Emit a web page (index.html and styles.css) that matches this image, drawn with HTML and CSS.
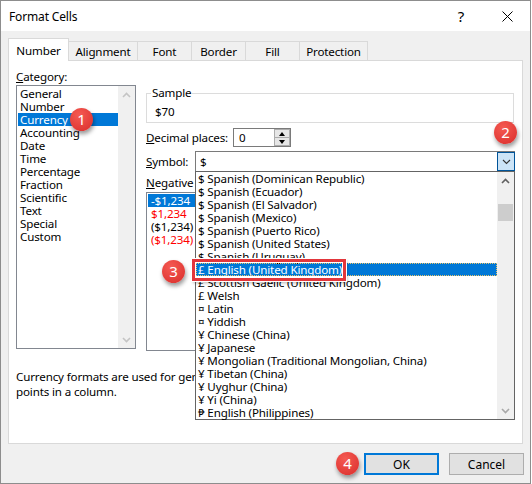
FILE: index.html
```html
<!DOCTYPE html>
<html>
  <head>
    <meta charset="UTF-8" />
    <title>Format Cells</title>
    <link rel="stylesheet" href="styles.css">
  </head>
  <body>
    <div class="window">

      <div class="titlebar">
        <span class="title">Format Cells</span>
        <span class="help">?</span>
        <span class="close">
          <svg width="11" height="11" viewBox="0 0 11 11"><path d="M0.5 0.5 L10.5 10.5 M10.5 0.5 L0.5 10.5" stroke="#000" stroke-width="1" fill="none"/></svg>
        </span>
      </div>

      <div class="client">

        <div class="tabs">
          <div class="tab active tab-number">Number</div>
          <div class="tab tab-wide">Alignment</div>
          <div class="tab">Font</div>
          <div class="tab">Border</div>
          <div class="tab">Fill</div>
          <div class="tab tab-last">Protection</div>
        </div>

        <div class="panel">
          <div class="main">

            <div class="category">
              <div class="label"><u>C</u>ategory:</div>
              <div class="listbox cat-list">
                <div class="items">
                  <div class="item">General</div>
                  <div class="item">Number</div>
                  <div class="item sel">Currency</div>
                  <div class="item">Accounting</div>
                  <div class="item">Date</div>
                  <div class="item">Time</div>
                  <div class="item">Percentage</div>
                  <div class="item">Fraction</div>
                  <div class="item">Scientific</div>
                  <div class="item">Text</div>
                  <div class="item">Special</div>
                  <div class="item">Custom</div>
                </div>
                <div class="vscroll">
                  <div class="arrow"><svg width="9" height="6" viewBox="0 0 9 6"><polyline points="1,5 4.5,1.5 8,5" fill="none" stroke="#c4c4c4" stroke-width="1.6"/></svg></div>
                  <div class="track"></div>
                  <div class="arrow"><svg width="9" height="6" viewBox="0 0 9 6"><polyline points="1,1 4.5,4.5 8,1" fill="none" stroke="#c4c4c4" stroke-width="1.6"/></svg></div>
                </div>
              </div>
            </div>

            <div class="details">
              <fieldset class="sample">
                <legend>Sample</legend>
                <div class="sample-value">$70</div>
              </fieldset>

              <div class="dec-row">
                <span class="row-label dec-label"><u>D</u>ecimal places:</span>
                <div class="spin-input">
                  <span class="spin-value">0</span>
                  <div class="spin">
                    <div class="spin-btn"><span class="tri-up"></span></div>
                    <div class="spin-btn"><span class="tri-down"></span></div>
                  </div>
                </div>
              </div>

              <div class="sym-row">
                <span class="row-label sym-label"><u>S</u>ymbol:</span>
                <div class="combo">
                  <span class="combo-value">$</span>
                  <div class="combo-btn">
                    <svg width="9" height="6" viewBox="0 0 9 6"><polyline points="1,1 4.5,4.5 8,1" fill="none" stroke="#333" stroke-width="1.1"/></svg>
                  </div>

                  <div class="dropdown">
                    <div class="items">
                      <div class="item">$ Spanish (Dominican Republic)</div>
                      <div class="item">$ Spanish (Ecuador)</div>
                      <div class="item">$ Spanish (El Salvador)</div>
                      <div class="item">$ Spanish (Mexico)</div>
                      <div class="item">$ Spanish (Puerto Rico)</div>
                      <div class="item">$ Spanish (United States)</div>
                      <div class="item">$ Spanish (Uruguay)</div>
                      <div class="item sel focus">£ English (United Kingdom)</div>
                      <div class="item">£ Scottish Gaelic (United Kingdom)</div>
                      <div class="item">£ Welsh</div>
                      <div class="item">¤ Latin</div>
                      <div class="item">¤ Yiddish</div>
                      <div class="item">¥ Chinese (China)</div>
                      <div class="item">¥ Japanese</div>
                      <div class="item">¥ Mongolian (Traditional Mongolian, China)</div>
                      <div class="item">¥ Tibetan (China)</div>
                      <div class="item">¥ Uyghur (China)</div>
                      <div class="item">¥ Yi (China)</div>
                      <div class="item">₱ English (Philippines)</div>
                    </div>
                    <div class="vscroll">
                      <div class="arrow"><svg width="9" height="6" viewBox="0 0 9 6"><polyline points="1,5 4.5,1.5 8,5" fill="none" stroke="#606060" stroke-width="1.6"/></svg></div>
                      <div class="track"><div class="thumb"></div></div>
                      <div class="arrow"><svg width="9" height="6" viewBox="0 0 9 6"><polyline points="1,1 4.5,4.5 8,1" fill="none" stroke="#a8a8a8" stroke-width="1.6"/></svg></div>
                    </div>
                  </div>
                </div>
              </div>

              <div class="label neg-label"><u>N</u>egative numbers:</div>
              <div class="listbox neg-list">
                <div class="item sel">-$1,234</div>
                <div class="item red">$1,234</div>
                <div class="item">($1,234)</div>
                <div class="item red">($1,234)</div>
              </div>
            </div>

          </div>

          <p class="desc">Currency formats are used for general monetary values. Use Accounting formats to align decimal<br>points in a column.</p>
        </div>

        <div class="buttons">
          <button class="btn ok">OK</button>
          <button class="btn">Cancel</button>
        </div>
      </div>

      <div class="callout"></div>
      <div class="badge b1">1</div>
      <div class="badge b2">2</div>
      <div class="badge b3">3</div>
      <div class="badge b4">4</div>
    </div>
  </body>
</html>
```

FILE: styles.css
```css
* {
  box-sizing: border-box;
}

body {
  margin: 0;
  font-family: "Noto Sans", "Open Sans", sans-serif;
  font-size: 11.6px;
  letter-spacing: -0.15px;
  color: #000;
  background: #fff;
}

.window {
  position: relative;
  width: 531px;
  height: 484px;
  border: 1px solid #8d8d8d;
  background: #f0f0f0;
  overflow: hidden;
}

/* title bar */

.titlebar {
  display: flex;
  align-items: center;
  height: 30px;
  padding-left: 8px;
  background: #fff;
  font-size: 12px;
}

.title {
  flex: 1;
}

.help {
  width: 46px;
  text-align: center;
  font-size: 15px;
}

.close {
  width: 46px;
  display: flex;
  justify-content: center;
}

/* dialog body */

.client {
  padding: 7px 6px 0 7px;
}

.tabs {
  display: flex;
  align-items: flex-end;
  height: 23px;
  margin-bottom: -1px;
  position: relative;
  z-index: 1;
}

.tab {
  width: 55px;
  height: 20px;
  margin-right: -1px;
  border: 1px solid #d9d9d9;
  background: #f0f0f0;
  display: flex;
  align-items: center;
  justify-content: center;
}

.tab-number {
  width: 61px;
}

.tab-wide {
  width: 70px;
}

.tab-last {
  width: 69px;
}

.tab.active {
  height: 23px;
  background: #fff;
  border-bottom: none;
  position: relative;
  z-index: 1;
}

.panel {
  height: 384px;
  margin-right: 1px;
  padding: 8px 7px 0 7px;
  background: #fff;
  border: 1px solid #d9d9d9;
}

.main {
  display: flex;
  gap: 10px;
}

.label {
  height: 16px;
  line-height: 16px;
  white-space: nowrap;
}

.row-label {
  white-space: nowrap;
}

/* list boxes */

.listbox {
  border: 1px solid #828790;
  background: #fff;
}

.item {
  height: 13px;
  line-height: 13px;
  padding-left: 2px;
  white-space: nowrap;
}

.item.sel {
  background: #0078d7;
  color: #fff;
}

.item.red {
  color: #ff0000;
}

.category {
  width: 121px;
}

.cat-list {
  display: flex;
  height: 264px;
}

.cat-list .items {
  flex: 1;
  padding: 1px 0 0 1px;
}

.vscroll {
  width: 17px;
  background: #f0f0f0;
  display: flex;
  flex-direction: column;
}

.vscroll .arrow {
  height: 17px;
  display: flex;
  align-items: center;
  justify-content: center;
}

.vscroll .track {
  flex: 1;
}

.thumb {
  margin: 15px 1px 0 1px;
  height: 17px;
  background: #cdcdcd;
}

/* right side */

.details {
  width: 369px;
  padding-top: 16px;
}

.sample {
  margin: 0;
  width: 368px;
  padding: 3px 8px 2px 8px;
  border: 1px solid #dcdcdc;
}

.sample legend {
  margin-left: -4px;
  padding: 0 1px;
  line-height: 16px;
}

.sample-value {
  line-height: 16px;
}

.dec-row {
  display: flex;
  align-items: center;
  height: 19px;
  margin-top: 5px;
}

.dec-label {
  width: 87px;
}

.spin-input {
  display: flex;
  align-items: center;
  width: 58px;
  height: 19px;
  border: 1px solid #7a7a7a;
  background: #fff;
}

.spin-value {
  padding-left: 5px;
}

.spin {
  margin-left: auto;
  width: 16px;
  height: 17px;
  display: flex;
  flex-direction: column;
}

.spin-btn {
  flex: 1;
  background: #e6e6e6;
  border: 1px solid #acacac;
  display: flex;
  align-items: center;
  justify-content: center;
}

.spin-btn + .spin-btn {
  border-top: none;
}

.tri-up {
  border-left: 3px solid transparent;
  border-right: 3px solid transparent;
  border-bottom: 4px solid #000;
}

.tri-down {
  border-left: 3px solid transparent;
  border-right: 3px solid transparent;
  border-top: 4px solid #000;
}

.sym-row {
  display: flex;
  align-items: center;
  height: 21px;
  margin-top: 4px;
}

.sym-label {
  width: 49px;
}

.combo {
  position: relative;
  display: flex;
  align-items: stretch;
  width: 320px;
  height: 21px;
  border: 1px solid #7a7a7a;
  background: #fff;
}

.combo-value {
  flex: 1;
  padding-left: 4px;
  line-height: 19px;
}

.combo-btn {
  width: 18px;
  margin-right: -1px;
  background: #cce4f7;
  border: 1px solid #005499;
  display: flex;
  align-items: center;
  justify-content: center;
}

.dropdown {
  position: absolute;
  left: -1px;
  top: 100%;
  width: 320px;
  height: 249px;
  border: 1px solid #646464;
  background: #fff;
  display: flex;
  z-index: 3;
}

.dropdown .items {
  flex: 1;
}

.item.focus {
  outline: 1px dotted #e8c36a;
  outline-offset: -1px;
}

.neg-label {
  margin-top: 3px;
}

.neg-list {
  height: 159px;
  margin-top: 1px;
  padding: 1px 0 0 1px;
}

.neg-list .item {
  padding-left: 3px;
}

.desc {
  margin: 18px 0 0 0;
  line-height: 15px;
  white-space: nowrap;
  overflow: hidden;
}

/* buttons */

.buttons {
  display: flex;
  justify-content: flex-end;
  gap: 10px;
  margin-top: 9px;
}

.btn {
  width: 75px;
  height: 22px;
  font-family: inherit;
  font-size: 12px;
  background: #e1e1e1;
  border: 1px solid #adadad;
  padding: 0;
}

.btn.ok {
  border: 2px solid #0078d7;
}

/* annotations */

.callout {
  position: absolute;
  left: 191px;
  top: 258px;
  width: 154px;
  height: 22px;
  border: 3px solid #e2363b;
  box-shadow: 0 0 0 1px #fff, inset 0 0 0 1px #fff, 1px 2px 3px rgba(0, 0, 0, 0.3);
  z-index: 4;
}

.badge {
  position: absolute;
  width: 23px;
  height: 23px;
  border-radius: 50%;
  background: radial-gradient(circle at 40% 30%, #f55a52, #d92d2b);
  color: #fff;
  font-size: 15px;
  letter-spacing: 0;
  line-height: 23px;
  text-align: center;
  box-shadow: 1px 3px 4px rgba(0, 0, 0, 0.4);
  z-index: 5;
}

.b1 {
  left: 69px;
  top: 107px;
}

.b2 {
  left: 493px;
  top: 120px;
}

.b3 {
  left: 161px;
  top: 259px;
}

.b4 {
  left: 335px;
  top: 451px;
}
```
